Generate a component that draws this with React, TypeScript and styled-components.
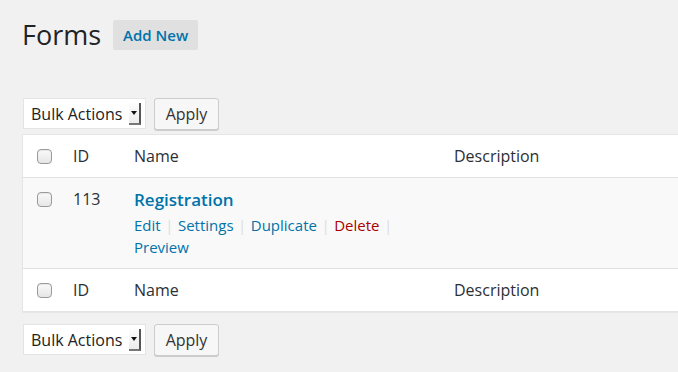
import styled, { createGlobalStyle } from "styled-components";
import { JSX } from "react";

const GlobalStyle = createGlobalStyle`
  html, body {
    margin: 0;
    padding: 0;
    background: #f1f1f1;
    overflow: hidden;
  }
  body {
    font-family: "Open Sans", "Liberation Sans", sans-serif;
    color: #32373c;
  }
`;

const Page = styled.div`
  width: 678px;
  height: 372px;
  padding: 0 0 0 22px;
  box-sizing: border-box;
  overflow: hidden;
`;

const TitleBar = styled.div`
  display: flex;
  align-items: center;
  gap: 12px;
  padding-top: 20px;
  height: 30px;
`;

const Title = styled.h1`
  margin: 0;
  font-size: 27px;
  font-weight: 400;
  line-height: 30px;
  color: #1f2326;
`;

const AddNew = styled.a`
  display: inline-flex;
  align-items: center;
  height: 30px;
  padding: 0 10px;
  background: #e0e0e0;
  border-radius: 2px;
  color: #0073aa;
  font-size: 15px;
  font-weight: 600;
  text-decoration: none;
`;

const Actions = styled.div<{ $top?: boolean }>`
  display: flex;
  gap: 8px;
  margin: ${({ $top }) => ($top ? "48px 0 4px 1px" : "12px 0 0 1px")};
`;

const Select = styled.div`
  display: flex;
  align-items: center;
  justify-content: space-between;
  width: 123px;
  height: 31px;
  box-sizing: border-box;
  padding: 0 4px 0 7px;
  background: #fff;
  border: 1px solid #e4e4e4;
  font-size: 16px;
  color: #222;
`;

const Arrow = styled.span`
  position: relative;
  width: 12px;
  height: 22px;
  background: linear-gradient(#fdfdfd, #ececec);
  border-right: 2px solid #555;
  border-bottom: 2px solid #777;
  box-sizing: border-box;

  &::after {
    content: "";
    position: absolute;
    left: 2px;
    top: 8px;
    border-left: 3.5px solid transparent;
    border-right: 3.5px solid transparent;
    border-top: 4px solid #111;
  }
`;

const Button = styled.button`
  height: 32px;
  width: 65px;
  padding: 0;
  background: #f7f7f7;
  border: 1px solid #ccc;
  border-radius: 3px;
  box-shadow: 0 1px 0 #ccc;
  font-family: inherit;
  font-size: 16px;
  color: #333;
`;

const Table = styled.div`
  width: 680px;
  background: #fff;
  border: 1px solid #e5e5e5;
  border-right: none;
  box-shadow: 0 1px 1px rgba(0, 0, 0, 0.04);
`;

const Row = styled.div<{ $body?: boolean }>`
  display: grid;
  grid-template-columns: 50px 61px 320px 1fr;
  height: ${({ $body }) => ($body ? "90px" : "42px")};
  align-items: ${({ $body }) => ($body ? "start" : "center")};
  background: ${({ $body }) => ($body ? "#f9f9f9" : "#fff")};
  border-bottom: 1px solid #e1e1e1;
  font-size: 16px;
  color: #2c3034;

  &:last-child {
    border-bottom: none;
  }
`;

const CheckCell = styled.div<{ $body?: boolean }>`
  padding-left: 14px;
  padding-top: ${({ $body }) => ($body ? "14px" : "0")};
  display: flex;
`;

const Checkbox = styled.span`
  width: 15px;
  height: 15px;
  box-sizing: border-box;
  border: 1px solid #9a9a9a;
  border-radius: 4px;
  background: linear-gradient(#fafafa, #e6e6e6);
  box-shadow: inset 0 1px 1px rgba(0, 0, 0, 0.08);
`;

const Cell = styled.div<{ $body?: boolean }>`
  padding-top: ${({ $body }) => ($body ? "10px" : "0")};
  line-height: 22px;
`;

const FormName = styled.a`
  display: block;
  font-size: 17px;
  font-weight: 600;
  color: #0073aa;
  text-decoration: none;
  line-height: 22px;
  margin-top: 1px;
`;

const RowActions = styled.div`
  margin-top: 3px;
  font-size: 15px;
  line-height: 22px;
  color: #ddd;
`;

const ActionLink = styled.a<{ $danger?: boolean }>`
  color: ${({ $danger }) => ($danger ? "#a00" : "#0073aa")};
  text-decoration: none;
`;

const Sep = styled.span`
  color: #ddd;
  margin: 0 4.5px;
`;

const BulkActions = ({ top }: { top?: boolean }): JSX.Element => (
  <Actions $top={top}>
    <Select>
      Bulk Actions
      <Arrow />
    </Select>
    <Button>Apply</Button>
  </Actions>
);

const HeadRow = (): JSX.Element => (
  <Row>
    <CheckCell>
      <Checkbox />
    </CheckCell>
    <Cell>ID</Cell>
    <Cell>Name</Cell>
    <Cell>Description</Cell>
  </Row>
);

const App = (): JSX.Element => {
  return (
    <Page>
      <GlobalStyle />
      <TitleBar>
        <Title>Forms</Title>
        <AddNew href="#">Add New</AddNew>
      </TitleBar>
      <BulkActions top />
      <Table>
        <HeadRow />
        <Row $body>
          <CheckCell $body>
            <Checkbox />
          </CheckCell>
          <Cell $body>113</Cell>
          <Cell $body>
            <FormName href="#">Registration</FormName>
            <RowActions>
              <ActionLink href="#">Edit</ActionLink>
              <Sep>|</Sep>
              <ActionLink href="#">Settings</ActionLink>
              <Sep>|</Sep>
              <ActionLink href="#">Duplicate</ActionLink>
              <Sep>|</Sep>
              <ActionLink href="#" $danger>
                Delete
              </ActionLink>
              <Sep>|</Sep>
              <br />
              <ActionLink href="#">Preview</ActionLink>
            </RowActions>
          </Cell>
          <Cell $body />
        </Row>
        <HeadRow />
      </Table>
      <BulkActions />
    </Page>
  );
};

export default App;
